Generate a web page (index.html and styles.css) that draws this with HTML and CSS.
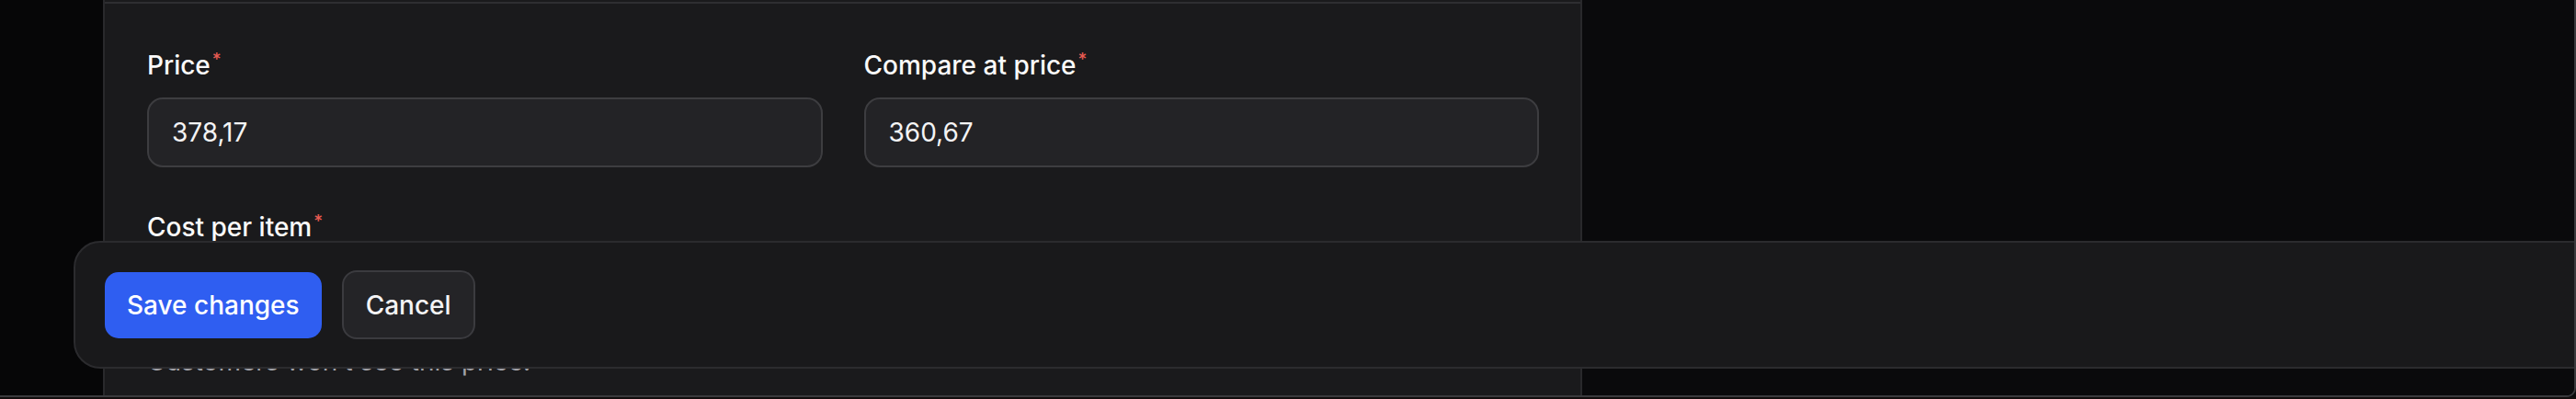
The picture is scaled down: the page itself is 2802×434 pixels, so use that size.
FILE: index.html
```html
<!DOCTYPE html>
<html lang="en">
<head>
<meta charset="utf-8">
<title>Pricing</title>
<link rel="stylesheet" href="styles.css">
</head>
<body>
<div class="frame">
  <div class="layout">
    <aside class="rail"></aside>
    <section class="card">
      <div class="section">
        <div class="grid">
          <div class="field">
            <label class="label" for="price">Price<span class="req">*</span></label>
            <input class="input" id="price" type="text" value="378,17" readonly>
          </div>
          <div class="field">
            <label class="label" for="compare">Compare at price<span class="req">*</span></label>
            <input class="input" id="compare" type="text" value="360,67" readonly>
          </div>
          <div class="field">
            <label class="label" for="cost">Cost per item<span class="req">*</span></label>
            <input class="input" id="cost" type="text" value="" readonly>
            <p class="help">Customers won’t see this price.</p>
          </div>
        </div>
      </div>
    </section>
    <div class="rest"></div>
  </div>
  <div class="savebar">
    <button class="btn btn-primary" type="button">Save changes</button>
    <button class="btn btn-secondary" type="button">Cancel</button>
  </div>
</div>
<div class="below"></div>
</body>
</html>
```

FILE: styles.css
```css
* { box-sizing: border-box; }

html, body {
  margin: 0;
  padding: 0;
}

body {
  width: 2802px;
  height: 434px;
  overflow: hidden;
  background: #0a0a0c;
  font-family: Inter, "Noto Sans", "Liberation Sans", sans-serif;
  color: #f4f4f5;
}

.frame {
  position: relative;
  height: 432px;
  border-bottom: 2px solid #3a3a3d;
  border-right: 2px solid #3a3a3d;
  border-bottom-right-radius: 10px;
  overflow: hidden;
}

.layout {
  display: grid;
  grid-template-columns: 112px 1609px 1fr;
  height: 100%;
}

.rail {
  background: #060607;
}

.rest {
  background: #0a0a0c;
}

.card {
  background: #1a1a1c;
  border-left: 2px solid #29292c;
  border-right: 2px solid #29292c;
  padding-top: 2px;
}

.section {
  border-top: 2px solid #2e2e31;
  padding: 46px 45px 0 46px;
}

.grid {
  display: grid;
  grid-template-columns: 1fr 1fr;
  column-gap: 45px;
  row-gap: 44px;
}

.field {
  display: flex;
  flex-direction: column;
}

.label {
  display: block;
  height: 43px;
  font-size: 28px;
  line-height: 43px;
  font-weight: 500;
  color: #fafafa;
  margin-bottom: 13px;
}

.req {
  display: inline-block;
  vertical-align: top;
  font-size: 19px;
  line-height: 19px;
  margin-top: 5px;
  margin-left: 2px;
  color: #e85a52;
}

.input {
  height: 76px;
  width: 100%;
  background: #232326;
  border: 2px solid #3d3d40;
  border-radius: 17px;
  padding: 0 25px;
  font-family: inherit;
  font-size: 28px;
  color: #f4f4f5;
  outline: none;
}

.help {
  margin: 15px 0 0;
  font-size: 28px;
  line-height: 40px;
  color: #a1a1a7;
}

.savebar {
  position: absolute;
  left: 80px;
  top: 262px;
  right: -60px;
  height: 139px;
  background: #19191b;
  border: 2px solid #2b2b2e;
  border-radius: 29px;
  padding: 0 32px;
  display: flex;
  align-items: center;
  gap: 22px;
  z-index: 2;
}

.btn {
  font-family: inherit;
  font-size: 28px;
  font-weight: 500;
  color: #ffffff;
  padding: 0 24px;
  cursor: pointer;
}

.btn-primary {
  height: 72px;
  background: #2f5ef1;
  border: none;
  border-radius: 15px;
}

.btn-secondary {
  height: 75px;
  background: #242427;
  border: 2px solid #3b3b3f;
  border-radius: 16px;
  color: #f4f4f5;
}

.below {
  height: 2px;
  background: #120d0d;
}
```
